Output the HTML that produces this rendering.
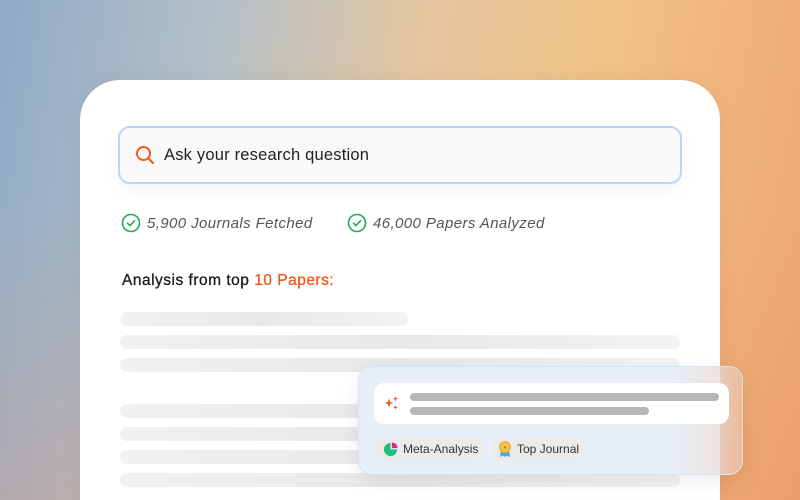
<!DOCTYPE html>
<html style="width:800px;height:500px;overflow:hidden"><head><style>
*{margin:0;padding:0;box-sizing:border-box}
body{width:800px;height:500px;overflow:hidden;position:relative;font-family:"Liberation Sans",sans-serif;
background:linear-gradient(100deg,#8eaac6 0%,#b4c0c8 25%,#e4c6a0 48%,#f1c286 70%,#eea470 100%);}
.bg2{position:absolute;inset:0;background:linear-gradient(180deg,rgba(0,0,0,0) 40%,rgba(232,140,100,.25) 100%)}
.card{position:absolute;left:80px;top:80px;width:640px;height:420px;background:#fff;border-radius:40px 40px 0 0;box-shadow:0 0 20px rgba(0,0,0,.05)}
.search{position:absolute;left:118px;top:126px;width:564px;height:58px;border:2px solid #b7d5fa;border-radius:12px;background:#f9f9f9;box-shadow:0 6px 16px rgba(0,0,0,.05)}
.search span{position:absolute;left:44px;top:18px;font-size:16.5px;letter-spacing:.2px;color:#222}
.chk{position:absolute;top:213px;font-size:15px;letter-spacing:.4px;font-style:italic;color:#555;display:flex;align-items:center;gap:6px}
.h{position:absolute;left:122px;top:272px;font-size:15.5px;letter-spacing:.5px;color:#1a1a1a;-webkit-text-stroke:.3px #1a1a1a}
.h b{font-weight:normal;color:#f05a1a;-webkit-text-stroke:.3px #f05a1a}
.bar{position:absolute;left:120px;height:14px;border-radius:7px;background:linear-gradient(90deg,#f1f1f1,#e8e8e8 50%,#f3f3f3)}
.float{position:absolute;left:358px;top:366px;width:385px;height:109px;border-radius:14px;border:1px solid #d5e3f4;
background:linear-gradient(90deg,rgba(230,238,248,.97) 0%,rgba(230,238,248,.97) 82%,rgba(235,200,180,.6) 100%);box-shadow:0 6px 20px rgba(0,0,0,.08)}
.inner{position:absolute;left:15px;top:16px;width:355px;height:41px;background:#fff;border-radius:10px}
.ln{position:absolute;height:8px;border-radius:4px;background:#b6b6b6}
.chip{position:absolute;top:70px;height:24px;border-radius:12px;background:#ebebec;font-size:12px;color:#333;display:flex;align-items:center;gap:5px;padding-left:7px}
</style></head><body>
<div class="bg2"></div>
<div class="card"></div>
<div class="search">
<svg style="position:absolute;left:15px;top:17px" width="20" height="20" viewBox="0 0 20 20"><circle cx="8.5" cy="8.5" r="6.5" fill="none" stroke="#f05a1a" stroke-width="2"/><path d="M13.3 13.3L18 18" stroke="#f05a1a" stroke-width="2" stroke-linecap="round"/></svg>
<span>Ask your research question</span></div>
<div class="chk" style="left:121px"><svg width="20" height="20" viewBox="0 0 20 20"><circle cx="10" cy="10" r="8.5" fill="none" stroke="#22a85a" stroke-width="1.6"/><path d="M6.5 10.2l2.4 2.4 4.6-4.8" fill="none" stroke="#22a85a" stroke-width="1.6" stroke-linecap="round" stroke-linejoin="round"/></svg>5,900 Journals Fetched</div>
<div class="chk" style="left:347px"><svg width="20" height="20" viewBox="0 0 20 20"><circle cx="10" cy="10" r="8.5" fill="none" stroke="#22a85a" stroke-width="1.6"/><path d="M6.5 10.2l2.4 2.4 4.6-4.8" fill="none" stroke="#22a85a" stroke-width="1.6" stroke-linecap="round" stroke-linejoin="round"/></svg>46,000 Papers Analyzed</div>
<div class="h">Analysis from top <b>10 Papers:</b></div>
<div class="bar" style="top:312px;width:288px"></div>
<div class="bar" style="top:335px;width:560px"></div>
<div class="bar" style="top:358px;width:560px"></div>
<div class="bar" style="top:404px;width:560px"></div>
<div class="bar" style="top:427px;width:560px"></div>
<div class="bar" style="top:450px;width:560px"></div>
<div class="bar" style="top:473px;width:560px"></div>
<div class="float">
<div class="inner">
<svg style="position:absolute;left:9px;top:11px" width="18" height="18" viewBox="0 0 18 18" fill="#f05a1a"><path d="M6 4.5L7.2 8 10.5 9 7.2 10 6 13.5 4.8 10 1.5 9 4.8 8Z"/><path d="M12.5 2L13.2 4 15 4.7 13.2 5.4 12.5 7.4 11.8 5.4 10 4.7 11.8 4Z"/><path d="M12.5 11L13.1 12.8 15 13.4 13.1 14 12.5 15.8 11.9 14 10 13.4 11.9 12.8Z"/></svg>
<div class="ln" style="left:36px;top:10px;width:309px"></div>
<div class="ln" style="left:36px;top:24px;width:239px"></div>
</div>
<div class="chip" style="left:17px;width:107px"><svg width="15" height="15" viewBox="0 0 16 16"><path d="M8 1A7 7 0 1 0 15 8H8Z" fill="#1fbf7f"/><path d="M9.5 0.5A6 6 0 0 1 15.5 6.5H9.5Z" fill="#e0257a"/></svg>Meta-Analysis</div>
<div class="chip" style="left:132px;width:95px"><svg width="14" height="18" viewBox="0 0 14 18"><path d="M3 10L2 17 5 15.5 7 17 9 15.5 12 17 11 10Z" fill="#4aa8d8"/><circle cx="7" cy="7" r="6" fill="#f2b531"/><circle cx="7" cy="7" r="3.5" fill="#f7cf5a"/><path d="M7 4.8l.7 1.4 1.5.2-1.1 1 .3 1.5L7 8.2l-1.4.7.3-1.5-1.1-1 1.5-.2Z" fill="#e07a1a"/></svg>Top Journal</div>
</div>
</body></html>
